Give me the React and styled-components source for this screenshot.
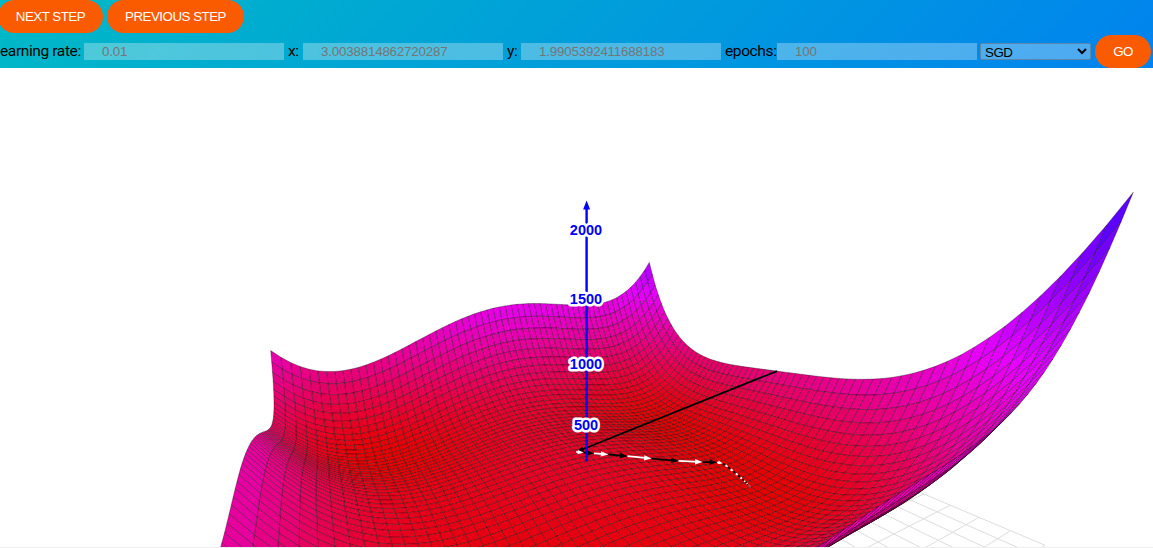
import React from "react";
import styled, { createGlobalStyle } from "styled-components";

const GlobalStyle = createGlobalStyle`
  * { box-sizing: border-box; }
  body { margin: 0; background: #fff; overflow: hidden; font-family: Roboto, sans-serif; }
`;

/* Himmelblau's function: the loss surface being descended */
const loss = (x, y) => (x * x + y - 11) ** 2 + (x + y * y - 7) ** 2;

const camera = {
  azimuth: 0.50844,
  elevation: 0.2353,
  distance: 10.20905,
  focal: 486.853,
  zScale: 0.0027412,
  zTarget: 1103.263,
  cx: 586,
  cy: 349.5,
};

function project(x, y, z) {
  const { azimuth, elevation, distance, focal, zScale, zTarget, cx, cy } = camera;
  const h = (z - zTarget) * zScale;
  const right = x * Math.cos(azimuth) + y * Math.sin(azimuth);
  const back = x * Math.sin(azimuth) - y * Math.cos(azimuth);
  const depth = distance + back * Math.cos(elevation) - h * Math.sin(elevation);
  const up = back * Math.sin(elevation) + h * Math.cos(elevation);
  return [cx + (focal * right) / depth, cy - (focal * up) / depth, depth];
}

function colorOf(v) {
  const blue = Math.min(1, v / 1200);
  const red = v < 1200 ? 0.9 : 0.9 - (v - 1200) * 0.00066;
  return `rgb(${Math.round(red * 255)},0,${Math.round(blue * 255)})`;
}

const RANGE = 6;
const DIVISIONS = 60;

function buildSurface() {
  const s = (2 * RANGE) / DIVISIONS;
  const out = [];
  for (let i = 0; i < DIVISIONS; i++) {
    for (let j = 0; j < DIVISIONS; j++) {
      const corners = [[0, 0], [1, 0], [1, 1], [0, 1]].map(([a, b]) => {
        const x = -RANGE + (i + a) * s;
        const y = -RANGE + (j + b) * s;
        return project(x, y, loss(x, y));
      });
      if (corners.every((c) => c[1] > 560)) continue;
      out.push({
        depth: corners.reduce((m, c) => m + c[2], 0) / 4,
        points: corners.map((c) => `${c[0].toFixed(1)},${c[1].toFixed(1)}`).join(" "),
        fill: colorOf(loss(-RANGE + (i + 0.5) * s, -RANGE + (j + 0.5) * s)),
      });
    }
  }
  return out.sort((a, b) => b.depth - a.depth);
}

const cells = buildSurface();

const floor = [];
for (let v = -RANGE; v <= RANGE; v += 0.5) {
  floor.push([project(v, -RANGE, 0), project(v, RANGE, 0)]);
  floor.push([project(-RANGE, v, 0), project(RANGE, v, 0)]);
}

/* Gradient descent with a learning rate of 0.01 */
const steps = [[6, 0]];
for (let k = 0; k < 100; k++) {
  const [x, y] = steps[k];
  const a = x * x + y - 11;
  const b = x + y * y - 7;
  steps.push([x - 0.01 * (4 * x * a + 2 * b), y - 0.01 * (2 * a + 4 * y * b)]);
}
const trail = steps.map(([x, y]) => project(x, y, loss(x, y)));

const controlFont = `13.333px "Liberation Sans", Arial, sans-serif`;

const Toolbar = styled.header`
  height: 68px;
  overflow: hidden;
  background: linear-gradient(135deg, #00b9c6 0%, #0083ee 100%);
`;
const ButtonRow = styled.div`
  display: flex;
  gap: 4px;
  height: 33px;
  margin-left: -2px;
`;
const Pill = styled.button`
  flex: none;
  width: ${(p) => p.$width}px;
  height: 33px;
  padding: 0 0 1px;
  border: 0;
  border-radius: 17px;
  background: #fb5b00;
  color: #fff;
  font: ${controlFont};
  letter-spacing: -0.5px;
`;
const FieldRow = styled.div`
  display: flex;
  align-items: center;
  height: 33px;
  margin-top: 2px;
  white-space: nowrap;
`;
const Label = styled.label`
  flex: none;
  width: ${(p) => p.$width}px;
  padding-bottom: 2px;
  color: #000;
  font-size: 15.5px;
  letter-spacing: -0.38px;
`;
const Field = styled.input`
  flex: none;
  width: 200px;
  height: 17px;
  margin-right: 4px;
  padding: 0 18px 1px;
  border: 0;
  background: rgba(255, 255, 255, 0.3);
  font: ${controlFont};
  letter-spacing: -0.18px;
  &::placeholder { color: #757575; opacity: 1; }
`;
const Select = styled.select`
  flex: none;
  width: 111px;
  height: 17px;
  margin: 0 4px 0 -1px;
  padding: 0 0 1px;
  border: 1px solid #5c87ad;
  border-radius: 2px;
  background: rgba(255, 255, 255, 0.3);
  color: #000;
  font: ${controlFont};
  letter-spacing: -0.5px;
`;
const Plot = styled.svg`
  display: block;
  width: 1153px;
  height: 479px;
`;
const Tick = styled.text`
  font: bold 14.5px "Liberation Sans", Arial, sans-serif;
  fill: #0000ff;
  text-anchor: middle;
  stroke: #fff;
  stroke-width: 5px;
  stroke-linejoin: round;
  paint-order: stroke;
`;
const Footer = styled.div`
  height: 1px;
  background: #eee;
`;

function Arrow({ from, to, tone }) {
  const dx = to[0] - from[0];
  const dy = to[1] - from[1];
  const length = Math.hypot(dx, dy) || 1;
  const ux = dx / length;
  const uy = dy / length;
  const head = Math.min(7.5, length * 0.8);
  const half = head * 0.36;
  const bx = to[0] - ux * head;
  const by = to[1] - uy * head;
  return (
    <g fill={tone} stroke={tone}>
      <line x1={from[0]} y1={from[1]} x2={to[0] - ux * head * 0.5} y2={to[1] - uy * head * 0.5} strokeWidth="1.8" />
      <polygon
        stroke="none"
        points={`${to[0]},${to[1]} ${bx - uy * half},${by + ux * half} ${bx + uy * half},${by - ux * half}`}
      />
    </g>
  );
}

export default function App() {
  const base = project(0, 0, 175);
  const top = project(0, 0, 2195);
  return (
    <>
      <GlobalStyle />
      <Toolbar>
        <ButtonRow>
          <Pill $width={105}>NEXT STEP</Pill>
          <Pill $width={137}>PREVIOUS STEP</Pill>
        </ButtonRow>
        <FieldRow>
          <Label $width={84}>earning rate:</Label>
          <Field placeholder="0.01" />
          <Label $width={15}>x:</Label>
          <Field placeholder="3.0038814862720287" />
          <Label $width={14}>y:</Label>
          <Field placeholder="1.9905392411688183" />
          <Label $width={52}>epochs:</Label>
          <Field placeholder="100" />
          <Select><option>SGD</option></Select>
          <Pill $width={56}>GO</Pill>
        </FieldRow>
      </Toolbar>
      <Plot viewBox="0 68 1153 479">
        <g stroke="#ddd" strokeWidth="1">
          {floor.map(([a, b], i) => <line key={i} x1={a[0]} y1={a[1]} x2={b[0]} y2={b[1]} />)}
        </g>
        <g stroke="#000" strokeOpacity=".66" strokeWidth=".46" strokeLinejoin="round">
          {cells.map((c, i) => <polygon key={i} points={c.points} fill={c.fill} />)}
        </g>
        {trail.slice(1).map((q, i) => <Arrow key={i} from={trail[i]} to={q} tone={i % 2 ? "#fff" : "#000"} />)}
        <g transform="translate(0.6 0)" fill="#00f" stroke="#00f">
          <line x1={base[0]} y1={base[1]} x2={top[0]} y2={top[1] + 4} strokeWidth="2.4" />
          <polygon stroke="none" points={`${top[0]},${top[1]} ${top[0] - 3.5},${top[1] + 9} ${top[0] + 3.5},${top[1] + 9}`} />
        </g>
        {[500, 1000, 1500, 2000].map((v) => (
          <Tick key={v} x={586} y={project(0, 0, v)[1] + 6.2}>{v}</Tick>
        ))}
      </Plot>
      <Footer />
    </>
  );
}
